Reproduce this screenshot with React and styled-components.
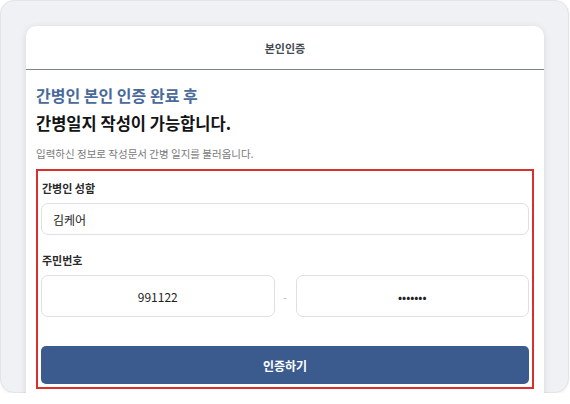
import React, { useState } from 'react';
import styled, { createGlobalStyle } from 'styled-components';

const GlobalStyle = createGlobalStyle`
  html, body {
    margin: 0;
    padding: 0;
    background: #ffffff;
    font-family: "Noto Sans CJK KR", "Noto Sans", sans-serif;
  }
  * { box-sizing: border-box; }
`;

const Frame = styled.div`
  width: 569px;
  height: 393px;
  background: #f0f1f4;
  border: 1px solid #e3e4e8;
  border-radius: 14px;
  padding: 25px 24px 0 25px;
  box-shadow: 0 1px 3px rgba(0, 0, 0, 0.05);
`;

const Card = styled.div`
  background: #ffffff;
  border-radius: 10px 10px 0 0;
  height: 374px;
  box-shadow: 0 1px 6px rgba(30, 40, 60, 0.12);
  display: flex;
  flex-direction: column;
`;

const Header = styled.div`
  height: 44px;
  display: flex;
  align-items: center;
  justify-content: center;
  font-size: 11px;
  font-weight: 600;
  color: #444a52;
  border-bottom: 1.5px solid #7d8591;
`;

const Body = styled.div`
  padding: 12px 10px 0 10px;
  display: flex;
  flex-direction: column;
`;

const Title = styled.div`
  font-size: 16px;
  font-weight: 700;
  color: #4a6a9a;
  line-height: 26px;
`;

const Subtitle = styled.div`
  font-size: 16.5px;
  font-weight: 700;
  color: #141414;
  line-height: 28px;
  margin-top: 1px;
`;

const Note = styled.div`
  font-size: 10.5px;
  color: #7a7a7a;
  margin-top: 8px;
  line-height: 18px;
`;

const FormBox = styled.form`
  margin-top: 6px;
  border: 2px solid #d8302c;
  padding: 8px 3px 3px 3px;
  display: flex;
  flex-direction: column;
`;

const Label = styled.div`
  font-size: 11px;
  font-weight: 600;
  color: #2a2a2a;
  line-height: 18px;
  margin-left: 1px;
  margin-top: ${(p) => p.$top || 0}px;
`;

const Input = styled.input`
  flex: none;
  width: 100%;
  height: 32px;
  border: 1px solid #dedfe2;
  border-radius: 7px;
  padding: 0 11px;
  font-family: inherit;
  font-size: 12px;
  color: #222;
  text-align: left;
  outline: none;
  background: #fff;
  margin-top: 6px;
`;

const HalfInput = styled(Input)`
  flex: 1;
  min-width: 0;
  height: 42px;
  text-align: center;
`;

const SplitRow = styled.div`
  display: flex;
  align-items: center;
`;

const Dash = styled.span`
  flex: 0 0 21px;
  text-align: center;
  font-size: 10px;
  color: #aaa;
  margin-top: 6px;
`;

const Submit = styled.button`
  margin-top: 29px;
  height: 38px;
  width: 100%;
  border: none;
  border-radius: 5px;
  background: #3b5b8f;
  color: #fff;
  font-family: inherit;
  font-size: 12px;
  font-weight: 700;
  cursor: pointer;
`;

export default function App() {
  const [name, setName] = useState('김케어');
  const [front, setFront] = useState('991122');
  const [back, setBack] = useState('1234567');

  return (
    <>
      <GlobalStyle />
      <Frame>
        <Card>
          <Header>본인인증</Header>
          <Body>
            <Title>간병인 본인 인증 완료 후</Title>
            <Subtitle>간병일지 작성이 가능합니다.</Subtitle>
            <Note>입력하신 정보로 작성문서 간병 일지를 불러옵니다.</Note>
            <FormBox onSubmit={(e) => e.preventDefault()}>
              <Label>간병인 성함</Label>
              <Input value={name} onChange={(e) => setName(e.target.value)} />
              <Label $top={16}>주민번호</Label>
              <SplitRow>
                <HalfInput value={front} onChange={(e) => setFront(e.target.value)} />
                <Dash>-</Dash>
                <HalfInput type="password" value={back} onChange={(e) => setBack(e.target.value)} />
              </SplitRow>
              <Submit type="submit">인증하기</Submit>
            </FormBox>
          </Body>
        </Card>
      </Frame>
    </>
  );
}
